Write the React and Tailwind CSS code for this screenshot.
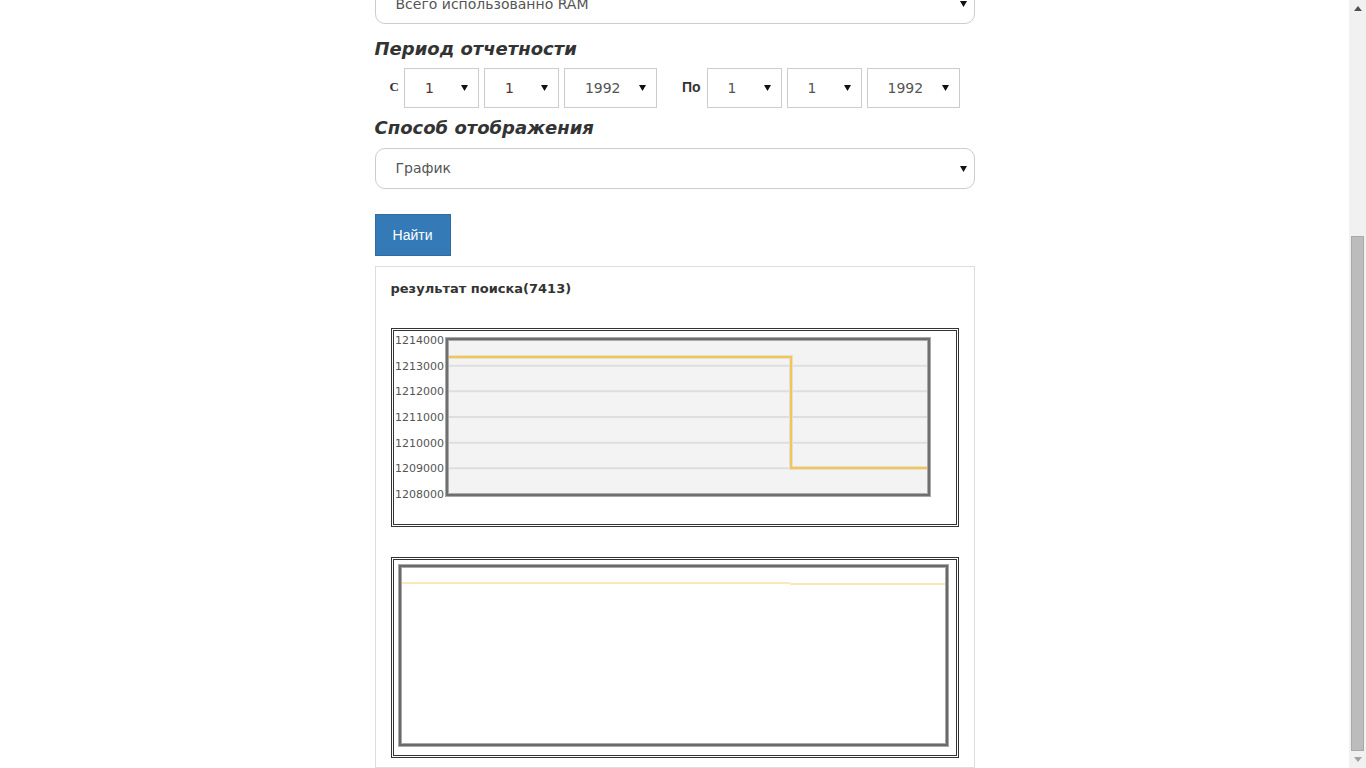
import React from "react";

const Arrow = () => (
  <svg width="7" height="6" viewBox="0 0 7 6" className="shrink-0">
    <path d="M0 0 L7 0 L3.5 6 Z" fill="#111" />
  </svg>
);

const DateSelect = ({ value, w, color = "#5a3030" }) => (
  <div
    className={`h-10 ${w} border border-[#ccc] bg-white flex items-center justify-between pl-5 pr-[10px] text-[14px]`}
    style={{ color }}
  >
    <span>{value}</span>
    <Arrow />
  </div>
);

const Chart1 = () => {
  const labels = ["1214000", "1213000", "1212000", "1211000", "1210000", "1209000", "1208000"];
  const ys = [9, 34.7, 60.3, 86, 111.7, 137.3, 163];
  return (
    <svg width="562" height="193" viewBox="0 0 562 193" className="block">
      <defs>
        <filter id="sh" x="-5%" y="-5%" width="110%" height="110%">
          <feGaussianBlur stdDeviation="0.6" />
        </filter>
      </defs>
      <rect x="53" y="8" width="482" height="156" fill="#f3f3f3" />
      {ys.slice(1, 6).map((y, i) => (
        <line key={i} x1="54" x2="534" y1={y} y2={y} stroke="#dedede" strokeWidth="2" />
      ))}
      <path d="M55 26 L397 26 L397 137 L535 137" fill="none" stroke="#e8e0c8" strokeWidth="4" filter="url(#sh)" />
      <path d="M55 26 L397 26 L397 137 L535 137" fill="none" stroke="#f2c55c" strokeWidth="2" />
      <rect x="53" y="8" width="482" height="156" fill="none" stroke="#aaa" strokeWidth="4" filter="url(#sh)" />
      <rect x="53" y="8" width="482" height="156" fill="none" stroke="#6f6f6f" strokeWidth="2" />
      {labels.map((l, i) => (
        <text
          key={l}
          x="50"
          y={ys[i] + 4}
          textAnchor="end"
          fontSize="11"
          fill="#555"
          fontFamily="'DejaVu Sans', Verdana, sans-serif"
        >
          {l}
        </text>
      ))}
    </svg>
  );
};

const Chart2 = () => (
  <svg width="562" height="195" viewBox="0 0 562 195" className="block">
    <defs>
      <filter id="sh2" x="-5%" y="-5%" width="110%" height="110%">
        <feGaussianBlur stdDeviation="0.6" />
      </filter>
    </defs>
    <rect x="6" y="6" width="547" height="179" fill="#fff" />
    <line x1="8" x2="396" y1="23" y2="23" stroke="#fbe8b8" strokeWidth="2" />
    <line x1="396" x2="552" y1="24" y2="24" stroke="#f8dc96" strokeWidth="1.5" />
    <rect x="6" y="6" width="547" height="179" fill="none" stroke="#aaa" strokeWidth="4" filter="url(#sh2)" />
    <rect x="6" y="6" width="547" height="179" fill="none" stroke="#6a6a6a" strokeWidth="2" />
  </svg>
);

export default function App() {
  const font = { fontFamily: "'DejaVu Sans', Verdana, sans-serif" };
  return (
    <div className="w-[1366px] h-[768px] flex overflow-hidden bg-white" style={font}>
      <div className="flex-1 overflow-hidden flex justify-center">
        <div className="w-[600px] -mt-[16px] flex flex-col">
          {/* top select */}
          <div className="h-10 shrink-0 border border-[#ccc] rounded-[10px] flex items-center justify-between pl-5 pr-[7px] text-[14px] text-[#555]">
            <span>Всего использованно RAM</span>
            <Arrow />
          </div>

          <h3 className="mt-[15px] text-[18px] leading-[20px] font-bold italic text-[#333]">
            Период отчетности
          </h3>

          <div className="mt-[9px] flex items-center pl-[15px]">
            <span
              className="text-[13px] font-bold text-[#333] mr-[5px] -mt-[2px]"
              style={{ fontFamily: "'Liberation Serif', serif" }}
            >
              С
            </span>
            <div className="flex gap-[5px]">
              <DateSelect value="1" w="w-[75px]" />
              <DateSelect value="1" w="w-[75px]" />
              <DateSelect value="1992" w="w-[93px]" color="#555" />
            </div>
            <span
              className="ml-[25px] mr-[6px] text-[14px] font-bold text-[#333] -mt-[2px]"
              style={{ fontFamily: "'Liberation Sans', Arial, sans-serif" }}
            >
              По
            </span>
            <div className="flex gap-[5px]">
              <DateSelect value="1" w="w-[75px]" color="#555" />
              <DateSelect value="1" w="w-[75px]" color="#555" />
              <DateSelect value="1992" w="w-[93px]" color="#555" />
            </div>
          </div>

          <h3 className="mt-[10px] text-[18px] leading-[20px] font-bold italic text-[#333]">
            Способ отображения
          </h3>

          <div className="mt-[10px] h-[41px] shrink-0 border border-[#ccc] rounded-[10px] flex items-center justify-between pl-5 pr-[7px] text-[14px] text-[#555]">
            <span>График</span>
            <Arrow />
          </div>

          <div className="mt-[25px]">
            <button
              className="h-[42px] w-[76px] bg-[#337ab7] border border-[#2e6da4] text-white text-[14px]"
              style={{ fontFamily: "'Liberation Sans', Arial, sans-serif" }}
            >
              Найти
            </button>
          </div>

          <div className="mt-[10px] border border-[#ddd] px-[15px] pt-[13px] pb-[9px] flex flex-col">
            <div className="text-[13px] font-bold text-[#333] leading-[18px]">результат поиска(7413)</div>
            <div className="mt-[30px] w-[568px] border-[3px] border-double border-[#333]">
              <Chart1 />
            </div>
            <div className="mt-[30px] w-[568px] border-[3px] border-double border-[#333]">
              <Chart2 />
            </div>
          </div>
        </div>
      </div>

      {/* scrollbar */}
      <div className="w-[17px] h-full bg-[#f1f1f1] flex flex-col items-center">
        <div className="h-[17px] flex items-center justify-center">
          <svg width="8" height="5" viewBox="0 0 8 5">
            <path d="M0 5 L4 0 L8 5 Z" fill="#505050" />
          </svg>
        </div>
        <div className="flex-1 w-full flex flex-col justify-end px-[2px]">
          <div className="h-[515px] bg-[#bcbcbc] border border-[#a9a9a9]" />
        </div>
        <div className="h-[17px] flex items-center justify-center">
          <svg width="8" height="5" viewBox="0 0 8 5">
            <path d="M0 0 L8 0 L4 5 Z" fill="#a3a3a3" />
          </svg>
        </div>
      </div>
    </div>
  );
}
